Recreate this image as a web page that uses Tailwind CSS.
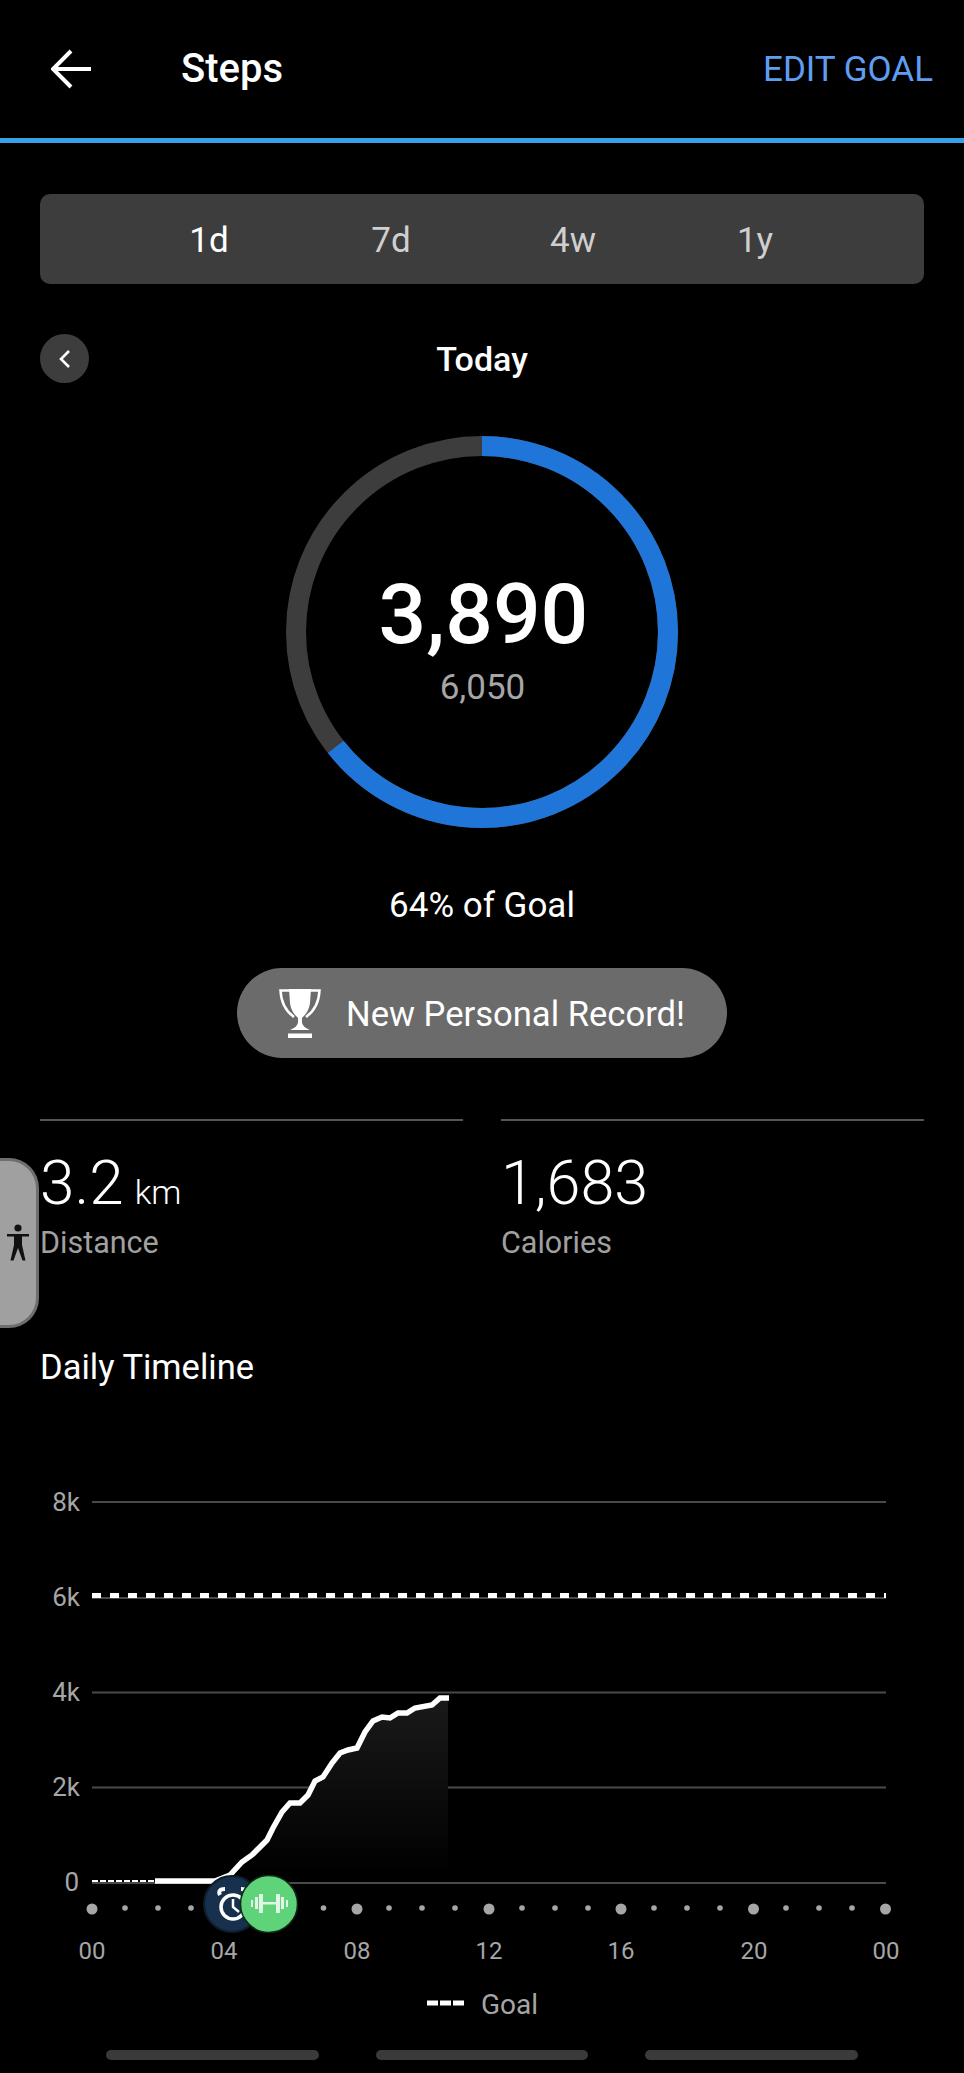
<!DOCTYPE html>
<html><head><meta charset="utf-8"><script src="https://cdn.jsdelivr.net/npm/@tailwindcss/browser@4"></script></head>
<body class="bg-black">
<div class="relative w-[964px] h-[2073px] overflow-hidden bg-black text-white font-['Roboto',sans-serif]">
  <header class="h-[138px] flex items-center pl-[51px] pr-[31px] pt-[0px]">
    <svg class="w-[40px] h-[40px]" viewBox="0 0 40 40" fill="none" stroke="#fff" stroke-width="4"><path d="M40 20H3M20 2 2 20l18 18"/></svg>
    <div class="ml-[90px] text-[40px] font-medium leading-none">Steps</div>
    <div class="ml-auto text-[35px] leading-none text-[#5f9df0]">EDIT GOAL</div>
  </header>
  <div class="h-[5px] bg-[#38a0e6]"></div>
  <nav class="mt-[51px] mx-[40px] h-[90px] pt-[4px] rounded-[10px] bg-[#3d3d3d] grid grid-cols-4 items-center px-[78px] text-center text-[35px] text-[#cfcfcf]">
    <span class="text-white">1d</span><span>7d</span><span>4w</span><span>1y</span>
  </nav>
  <div class="mt-[50px] mx-[40px] h-[49px] relative flex items-center justify-center">
    <div class="absolute left-0 top-0 w-[49px] h-[49px] rounded-full bg-[#3d3d3d] flex items-center justify-center">
      <svg class="w-[14px] h-[20px]" viewBox="0 0 14 20" fill="none" stroke="#fff" stroke-width="2.6"><path d="M11 2 3 10l8 8"/></svg>
    </div>
    <div class="text-[34px] font-medium leading-none">Today</div>
  </div>
  <div class="mt-[53px] mx-auto w-[392px] h-[392px] grid">
    <svg class="col-start-1 row-start-1 w-[392px] h-[392px]" viewBox="0 0 392 392" fill="none" stroke-width="20">
      <circle cx="196" cy="196" r="186" stroke="#3d3d3d"/>
      <circle cx="196" cy="196" r="186" stroke="#1f76d8" pathLength="100" stroke-dasharray="64.4 100" transform="rotate(-90 196 196)"/>
    </svg>
    <div class="col-start-1 row-start-1 flex flex-col items-center pt-[131px] pl-[3px]">
      <div class="text-[84px] font-medium leading-[96px]">3,890</div>
      <div class="text-[35px] leading-[40px] text-[#a6a6a6] mt-[5px] -ml-[2px]">6,050</div>
    </div>
  </div>
  <div class="mt-[58px] h-[40px] text-center text-[35px] leading-[40px]">64% of Goal</div>
  <div class="mt-[42px] ml-[237px] w-[490px] h-[90px] rounded-full bg-[#6b6b6b] flex items-center pl-[42px]">
    <svg class="w-[42px] h-[50px]" viewBox="0 0 42 50" fill="none">
      <path d="M11 2.500H1.500C2 13 5 22 15 29M31 2.500h9.500C40 13 37 22 27 29" stroke="#fff" stroke-width="2.500"/>
      <path d="M10 1h22l-1 14c-1 8-5 12-8 15v4c0 3 3 6 8 8H11c5-2 8-5 8-8v-4c-3-3-7-7-8-15z" fill="#fff"/>
      <rect x="9" y="45.500" width="24" height="4.500" fill="#fff"/>
    </svg>
    <div class="ml-[25px] pt-[3px] text-[34.600px] leading-none">New Personal Record!</div>
  </div>
  <section class="mt-[61px] mx-[40px] grid grid-cols-2 gap-x-[38px]">
    <div class="border-t-2 border-[#555] pt-[28px]">
      <div class="h-[68px] leading-[68px] text-[62px] font-light whitespace-nowrap">3.2<span class="ml-[11px] text-[34px] font-light">km</span></div>
      <div class="mt-[7px] text-[30.500px] leading-[38px] text-[#a0a0a0]">Distance</div>
    </div>
    <div class="border-t-2 border-[#555] pt-[28px]">
      <div class="h-[68px] leading-[68px] text-[61px] font-light">1,683</div>
      <div class="mt-[7px] text-[30.500px] leading-[38px] text-[#a0a0a0]">Calories</div>
    </div>
  </section>
  <h2 class="mt-[85px] ml-[40px] text-[34.500px] leading-[40px] font-normal">Daily Timeline</h2>
  <svg class="mt-[13px] block w-[964px] h-[660px]" viewBox="0 1400 964 660" fill="none">
    <defs><linearGradient id="g" x1="0" y1="0" x2="0" y2="1"><stop offset="0" stop-color="#1a1a1a"/><stop offset="1" stop-color="#000"/></linearGradient></defs>
    <g stroke="#4a4a4a" stroke-width="2">
      <path d="M92 1502H886M92 1598H886M92 1692.500H886M92 1787.500H886M92 1883H886"/>
    </g>
    <path d="M230 1875 242 1862 252 1855 267 1840 273 1828 282 1812 290 1803 300 1803 308 1795 315 1781 323 1777 332 1763 340 1753 348 1750 357 1748 365 1732 373 1721 382 1717 390 1718 398 1713 407 1713 415 1708 432 1705 440 1698 448 1698V1870H230Z" fill="url(#g)"/>
    <path d="M92 1595.500H886" stroke="#fff" stroke-width="5" stroke-dasharray="9 9"/>
    <path d="M92 1881H155" stroke="#fff" stroke-width="2" stroke-dasharray="6 2"/>
    <path d="M155 1881H215L230 1875 242 1862 252 1855 267 1840 273 1828 282 1812 290 1803 300 1803 308 1795 315 1781 323 1777 332 1763 340 1753 348 1750 357 1748 365 1732 373 1721 382 1717 390 1718 398 1713 407 1713 415 1708 432 1705 440 1698 449 1698" stroke="#fff" stroke-width="5.500"/>
    <g fill="#a6a6a6">
      <circle cx="92" cy="1909" r="5.500"/><circle cx="125" cy="1908" r="2.800"/><circle cx="158" cy="1908" r="2.800"/><circle cx="191" cy="1908" r="2.800"/>
      <circle cx="323.500" cy="1908" r="2.800"/><circle cx="357" cy="1909" r="5.500"/><circle cx="389" cy="1908" r="2.800"/><circle cx="422" cy="1908" r="2.800"/><circle cx="455" cy="1908" r="2.800"/>
      <circle cx="489" cy="1909" r="5.500"/><circle cx="522" cy="1908" r="2.800"/><circle cx="555" cy="1908" r="2.800"/><circle cx="588" cy="1908" r="2.800"/>
      <circle cx="621" cy="1909" r="5.500"/><circle cx="654" cy="1908" r="2.800"/><circle cx="687" cy="1908" r="2.800"/><circle cx="720" cy="1908" r="2.800"/>
      <circle cx="753.500" cy="1909" r="5.500"/><circle cx="786" cy="1908" r="2.800"/><circle cx="819" cy="1908" r="2.800"/><circle cx="852" cy="1908" r="2.800"/>
      <circle cx="885.500" cy="1909" r="5.500"/>
    </g>
    <circle cx="232" cy="1904" r="28" fill="#16304e" stroke="#0f1c29" stroke-width="2"/>
    <g stroke="#fff" stroke-width="3.500">
      <circle cx="233" cy="1907" r="12"/><path d="M233 1899v8l6 5" stroke-width="2.500"/>
      <path d="M220 1895c-2-4 0-6 5-6M246 1895c2-4 0-6-5-6" stroke-width="4"/>
    </g>
    <circle cx="269" cy="1904" r="28.500" fill="#5fd37a" stroke="#0c2a14" stroke-width="1.500"/>
    <g fill="#dff7e4">
      <rect x="262" y="1902" width="15" height="2.500"/>
      <rect x="259" y="1894" width="4" height="19"/><rect x="276" y="1894" width="4" height="19"/>
      <rect x="255" y="1897" width="3" height="12"/><rect x="281" y="1897" width="3" height="12"/>
      <rect x="251" y="1900" width="2" height="7"/><rect x="286" y="1900" width="2" height="7"/>
    </g>
    <g fill="#a6a6a6" font-size="26" text-anchor="end" font-family="Roboto">
      <text x="80" y="1511">8k</text><text x="80" y="1606">6k</text><text x="80" y="1701">4k</text><text x="80" y="1796">2k</text><text x="79" y="1891">0</text>
    </g>
    <g fill="#a6a6a6" font-size="24" text-anchor="middle" font-family="Roboto">
      <text x="92" y="1959">00</text><text x="224" y="1959">04</text><text x="357" y="1959">08</text><text x="489" y="1959">12</text><text x="621" y="1959">16</text><text x="754" y="1959">20</text><text x="886" y="1959">00</text>
    </g>
    <path d="M427 2003H464" stroke="#fff" stroke-width="5" stroke-dasharray="11 2"/>
    <text x="481" y="2014" fill="#a6a6a6" font-size="28" font-family="Roboto">Goal</text>
  </svg>
  <div class="absolute left-0 top-[1158px] w-[39px] h-[170px] rounded-r-[30px] bg-[#a0a0a0] border-[3px] border-l-0 border-[#6e6e6e] flex items-center justify-center">
    <svg class="w-[24px] h-[38px]" viewBox="0 0 24 38" fill="#111"><circle cx="12" cy="4" r="3.600"/><path d="M1 10h22v2.600h-7V21l3.500 15.500h-3L12 24l-4.500 12.500h-3L8 21v-8.400H1z"/></svg>
  </div>
  <div class="absolute left-[106px] right-[106px] top-[2050px] grid grid-cols-3 gap-x-[57px]">
    <div class="h-[10px] rounded-full bg-[#3a3a3a]"></div><div class="h-[10px] rounded-full bg-[#3a3a3a]"></div><div class="h-[10px] rounded-full bg-[#3a3a3a]"></div>
  </div>
</div>
</body></html>
